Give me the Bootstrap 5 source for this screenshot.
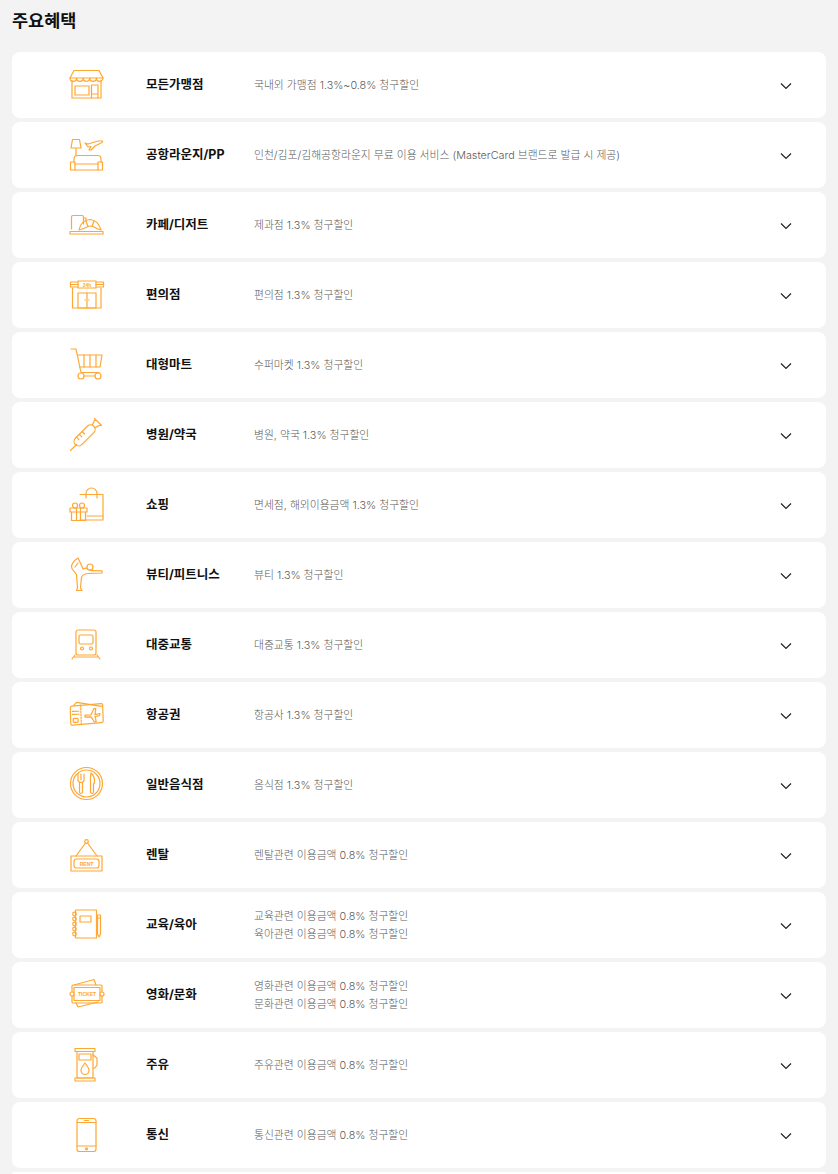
<!DOCTYPE html>
<html lang="ko">
<head>
  <meta charset="UTF-8">
  <title>주요혜택</title>
  <meta name="viewport" content="width=device-width, initial-scale=1.0"/>
  <link href="https://cdn.jsdelivr.net/npm/bootstrap@5.3.0/dist/css/bootstrap.min.css" rel="stylesheet">
  <style>
    html, body { height: 1174px; overflow: hidden; }
    body {
      background: #f3f3f3;
      font-family: Inter, "Noto Sans CJK KR", sans-serif;
      color: #111;
    }
    .page-title { font-size: 17.5px; font-weight: 700; line-height: 24px; margin: 9px 0 18.7px; }
    .benefit-row { height: 66px; border-radius: 8px; flex-shrink: 0; }
    .benefit-end { height: 2.3px; border-radius: 8px 8px 0 0; flex-shrink: 0; }
    .benefit-icon { width: 40px; height: 40px; margin-left: 54px; flex-shrink: 0; }
    .benefit-icon svg { display: block; fill: none; stroke: #ffa733; stroke-width: 1.2; stroke-linejoin: round; stroke-linecap: round; }
    .benefit-icon text { fill: #ffa733; stroke: none; font-family: "Liberation Sans", sans-serif; font-weight: 700; text-anchor: middle; }
    .benefit-name { width: 108px; margin-left: 40px; padding-top: 1px; font-size: 12.5px; font-weight: 700; flex-shrink: 0; }
    .benefit-desc { padding-top: 2px; font-size: 10.8px; line-height: 18px; color: #5a5a5a; font-weight: 300; }
    .benefit-arrow { margin-right: 34px; margin-top: 2px; flex-shrink: 0; }
  </style>
</head>
<body class="px-2 m-0">
  <div class="px-1">
    <h1 class="page-title">주요혜택</h1>
    <div id="benefitList" class="d-flex flex-column gap-1"></div>
  </div>

  <script>
    const icons = {
      store: '<path d="M8 5.500H33L37 13H4Z"/><path d="M4 13a3.300 3.300 0 0 0 6.600 0a3.300 3.300 0 0 0 6.600 0a3.300 3.300 0 0 0 6.600 0a3.300 3.300 0 0 0 6.600 0a3.300 3.300 0 0 0 6.600 0"/><path d="M6 15.500V33H35V15.500"/><rect x="9" y="21" width="14" height="9"/><path d="M25.500 33V20H32V33M25.500 29H32"/>',
      lounge: '<path d="M6.500 4.500H13.500L15 13H5ZM10 13V20.500"/><path d="M8 27V24Q8 20.500 12 20.500H32Q35 20.500 35 24V27"/><rect x="4.500" y="27" width="4.500" height="8"/><rect x="32" y="27" width="4.500" height="8"/><path d="M9 29H32M9 35H32"/><path d="M19 8L22 9L32 6L36.500 6Q37 7.500 34 8.500L29 11L25 15H23L25 11.500L22 12Z"/>',
      cafe: '<path d="M5.500 24V12Q5.500 10.500 7 10.500H16Q17.500 10.500 17.500 12V19"/><path d="M17.500 13H20V16"/><path d="M13 25Q15 15 24 14.500Q32 15 35 25Q31 24 28 22Q24 20 21 22Q17 24 13 25Z"/><path d="M20 16L22 21.500M28 16L26 21.500"/><rect x="4" y="26.500" width="33" height="2.500"/>',
      conv: '<rect x="4.500" y="7" width="33" height="5"/><rect x="12" y="6" width="18" height="7" fill="#fff"/><text x="21" y="11.500" font-size="5">24h</text><path d="M6.500 13V33H35V13"/><rect x="12" y="18" width="18" height="15"/><path d="M21 18V33M19 25H19.500M22.500 25H23M4.500 9.500H12M30 9.500H37.500"/>',
      cart: '<path d="M5 4H10L15 27.500H33"/><path d="M11.500 10H36L34 22H13.500"/><path d="M18 10V22M24 10V22M30 10V22"/><circle cx="15" cy="31" r="3"/><circle cx="32" cy="31" r="3"/><path d="M18 31H29"/>',
      syringe: '<path d="M4.500 35.500L10.500 29.500"/><g transform="rotate(-45 20 19)"><rect x="5" y="14.500" width="26" height="9" rx="4.500"/><path d="M11 14.500V18M15 14.500V18M19 14.500V18M31 17L37 15V23L31 21M37 14V24"/></g>',
      shop: '<path d="M14 9.500H37V35H14"/><path d="M20 13V8.500A5.500 5.500 0 0 1 31 8.500V13"/><path d="M21 31H37"/><rect x="4" y="23" width="17" height="4"/><path d="M5.500 27V35.500H19.500V27M10.500 23V35.500M14.500 23V35.500"/><circle cx="9" cy="20.500" r="2.500"/><circle cx="16" cy="20.500" r="2.500"/>',
      yoga: '<path d="M12 3C9 5 5.500 9 5.500 12C5.500 15 9 17 10.500 19.500L11.500 33L10.500 35.500H16L14.500 33L15.500 22C17 20 19 18.500 22 18.500L36 18V15.800L27 15.500C24 16 22 14.500 20 13L17 14C15.500 10 13.500 6 12 3Z"/><path d="M9 12L12 8"/><circle cx="24" cy="12" r="3" fill="#fff"/>',
      train: '<rect x="10" y="5" width="20" height="25" rx="2"/><rect x="13" y="10" width="14" height="9" rx="1.500"/><circle cx="16" cy="23.500" r="1.500"/><circle cx="25" cy="23.500" r="1.500"/><path d="M8 32H32M9 30L6 34M31 30L34 34"/>',
      flight: '<g transform="rotate(-2 20 20)"><path d="M8 10L11 7L36 12"/><rect x="4.500" y="11" width="32.500" height="19" rx="1.500" transform="skewY(-3)"/><path d="M15 10V29" stroke-dasharray="1.500 1.500"/><path d="M6.500 16H13M6.500 19H13"/><rect x="7" y="23" width="5" height="4" rx="1"/><path d="M19 20L25 20L28 14H30L29 20L34 19L33.500 21L29 22L30 27H28L25 22L19 22Z"/></g>',
      food: '<circle cx="20.500" cy="18.500" r="16"/><circle cx="20.500" cy="18.500" r="13.500"/><path d="M12 9V15Q12 17 15 17.500Q18 17 18 15V9M15 9V15M13.500 17.500V27Q13.500 28.500 15 28.500Q16.500 28.500 16.500 27V17.500"/><path d="M25 8Q29 11 28.500 18L27.500 19V27Q27.500 28.500 26 28.500Q24.500 28.500 24.500 27V18Q24 12 25 8Z"/>',
      rent: '<circle cx="20.500" cy="6.500" r="1.800"/><path d="M19.500 8L10 21M21.500 8L31 21"/><rect x="5" y="21" width="31" height="15"/><rect x="8" y="24" width="25" height="9" rx="2.500"/><text x="20.500" y="30.500" font-size="5">RENT</text>',
      note: '<rect x="9.500" y="5" width="21" height="28"/><rect x="14" y="11" width="11" height="6"/><circle cx="8.500" cy="9" r="1.800"/><circle cx="8.500" cy="14" r="1.800"/><circle cx="8.500" cy="19" r="1.800"/><circle cx="8.500" cy="24" r="1.800"/><circle cx="8.500" cy="29" r="1.800"/><path d="M31.500 10H34.500V29L33 32L31.500 29ZM31.500 13H34.500"/>',
      ticket: '<path d="M8 10L28 4.500L30 10M10 28L12 32L32 27"/><rect x="6" y="10" width="30" height="18" rx="1"/><rect x="8" y="12.500" width="26" height="13"/><circle cx="6" cy="19" r="2" fill="#fff"/><circle cx="36" cy="19" r="2" fill="#fff"/><text x="21" y="21" font-size="5">TICKET</text>',
      pump: '<rect x="9" y="3.500" width="20" height="3"/><path d="M11 6.500V33H27V6.500"/><rect x="9" y="33" width="20" height="3"/><rect x="13" y="9" width="12" height="6"/><path d="M19 18Q15 23 15 25.500A4 4 0 0 0 23 25.500Q23 23 19 18Z"/><path d="M27 10L31 13V20L29 23H27"/>',
      phone: '<rect x="11" y="3.500" width="19" height="33" rx="2.500"/><path d="M11 7.500H30M11 31H30M18.500 5.500H22.500"/><circle cx="20.500" cy="33.800" r="1"/>'
    };

    const benefits = [
      ['store', '모든가맹점', '국내외 가맹점 1.3%~0.8% 청구할인'],
      ['lounge', '공항라운지/PP', '인천/김포/김해공항라운지 무료 이용 서비스 (MasterCard 브랜드로 발급 시 제공)'],
      ['cafe', '카페/디저트', '제과점 1.3% 청구할인'],
      ['conv', '편의점', '편의점 1.3% 청구할인'],
      ['cart', '대형마트', '수퍼마켓 1.3% 청구할인'],
      ['syringe', '병원/약국', '병원, 약국 1.3% 청구할인'],
      ['shop', '쇼핑', '면세점, 해외이용금액 1.3% 청구할인'],
      ['yoga', '뷰티/피트니스', '뷰티 1.3% 청구할인'],
      ['train', '대중교통', '대중교통 1.3% 청구할인'],
      ['flight', '항공권', '항공사 1.3% 청구할인'],
      ['food', '일반음식점', '음식점 1.3% 청구할인'],
      ['rent', '렌탈', '렌탈관련 이용금액 0.8% 청구할인'],
      ['note', '교육/육아', '교육관련 이용금액 0.8% 청구할인<br>육아관련 이용금액 0.8% 청구할인'],
      ['ticket', '영화/문화', '영화관련 이용금액 0.8% 청구할인<br>문화관련 이용금액 0.8% 청구할인'],
      ['pump', '주유', '주유관련 이용금액 0.8% 청구할인'],
      ['phone', '통신', '통신관련 이용금액 0.8% 청구할인']
    ];

    const list = document.getElementById('benefitList');

    benefits.forEach(([icon, name, desc]) => {
      const row = document.createElement('div');
      row.className = 'benefit-row bg-white d-flex align-items-center';
      row.innerHTML = `
        <div class="benefit-icon"><svg width="40" height="40" viewBox="0 0 40 40">${icons[icon]}</svg></div>
        <div class="benefit-name">${name}</div>
        <div class="benefit-desc flex-grow-1">${desc}</div>
        <svg class="benefit-arrow" width="12" height="8" viewBox="0 0 12 8" fill="none" stroke="#222" stroke-width="1.2"><path d="M1 1.500L6 6.500L11 1.500"/></svg>
      `;
      list.appendChild(row);
    });

    // next card just shows at the bottom edge
    const rest = document.createElement('div');
    rest.className = 'benefit-end bg-white';
    list.appendChild(rest);
  </script>
  <script src="https://cdn.jsdelivr.net/npm/bootstrap@5.3.0/dist/js/bootstrap.bundle.min.js"></script>
</body>
</html>
